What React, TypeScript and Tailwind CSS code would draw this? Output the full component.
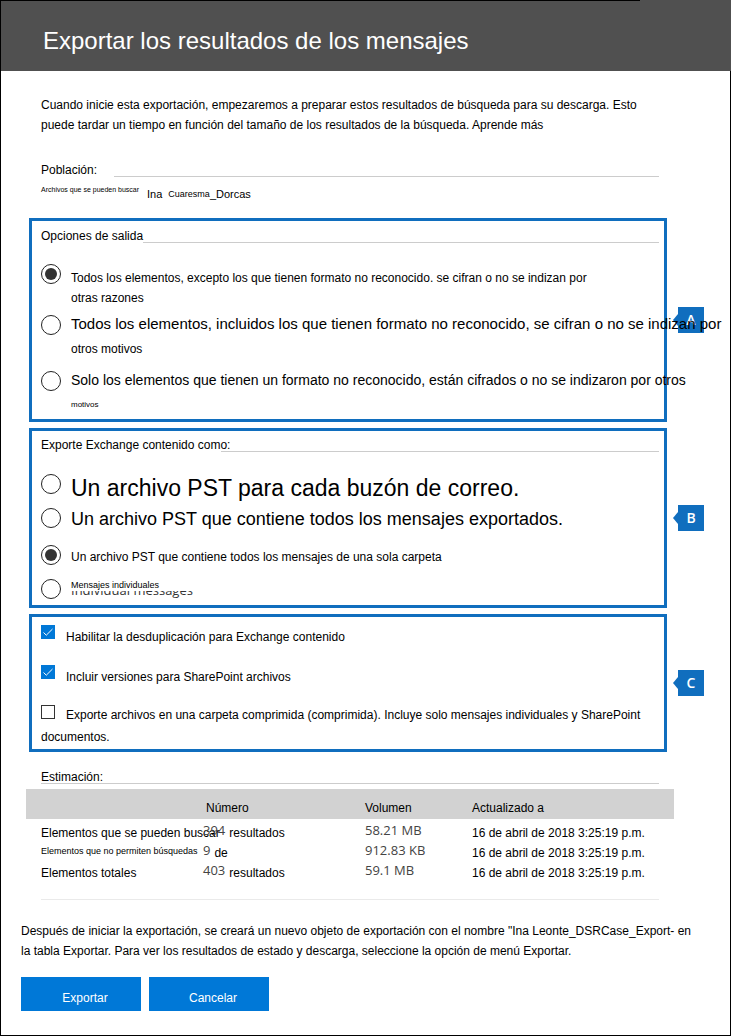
import type { ReactNode } from "react";

function SectionTitle({ children, lineClass }: { children: ReactNode; lineClass: string }) {
  return (
    <div className="grid">
      <span className="col-start-1 row-start-1">{children}</span>
      <span
        aria-hidden="true"
        className={"col-start-1 row-start-1 mb-[3px] self-end border-t border-[#cccccc] " + lineClass}
      />
    </div>
  );
}

function Callout({ letter, children, className }: { letter: string; children: ReactNode; className: string }) {
  return (
    <div className="flex items-center">
      <section
        className={
          "relative z-10 w-0 flex-1 border-[3px] border-[#106ebe] pr-[5px] pl-[9px] " + className
        }
      >
        {children}
      </section>
      <div className="ml-1.5 flex items-center">
        <svg width="5" height="12" viewBox="0 0 5 12" aria-hidden="true">
          <path d="M5 0V12L0 6Z" fill="#106ebe" />
        </svg>
        <span className="flex size-[26px] items-center justify-center bg-[#106ebe] font-['Open_Sans',sans-serif] text-sm font-semibold text-white">
          {letter}
        </span>
      </div>
    </div>
  );
}

function RadioOption({
  id,
  name,
  checked,
  className = "",
  radioClass = "",
  textClass = "",
  children,
}: {
  id: string;
  name: string;
  checked?: boolean;
  className?: string;
  radioClass?: string;
  textClass?: string;
  children: ReactNode;
}) {
  return (
    <div className={"flex items-start gap-2.5 " + className}>
      <input
        type="radio"
        id={id}
        name={name}
        defaultChecked={checked}
        className={
          "size-5 shrink-0 appearance-none rounded-full border border-[#222222] bg-clip-content p-[3px] checked:bg-[#333333] " +
          radioClass
        }
      />
      <label htmlFor={id} className={"block min-w-0 " + textClass}>
        {children}
      </label>
    </div>
  );
}

function Checkbox({ id, checked, className = "" }: { id: string; checked?: boolean; className?: string }) {
  return (
    <span className={"inline-grid size-3.5 shrink-0 " + className}>
      <input
        type="checkbox"
        id={id}
        defaultChecked={checked}
        className="peer col-start-1 row-start-1 size-3.5 appearance-none border border-[#333333] bg-white checked:border-[#0078d7] checked:bg-[#0078d7]"
      />
      <svg
        viewBox="0 0 14 14"
        aria-hidden="true"
        className="pointer-events-none col-start-1 row-start-1 hidden size-3.5 peer-checked:block"
      >
        <path d="M2.5 7.5L5.3 10.2L11.5 4" fill="none" stroke="#ffffff" strokeWidth="1" />
      </svg>
    </span>
  );
}

const rows = [
  { label: "Elementos que se pueden buscar", small: false, count: "394", unit: "resultados", size: "58.21 MB" },
  { label: "Elementos que no permiten búsquedas", small: true, count: "9", unit: "de", size: "912.83 KB" },
  { label: "Elementos totales", small: false, count: "403", unit: "resultados", size: "59.1 MB" },
];

export default function App() {
  return (
    <div className="flex min-h-screen flex-col border-x border-b border-black bg-white font-['Liberation_Sans',Arial,sans-serif] text-xs leading-5 text-black">
      <header className="-mr-px bg-[#505050]">
        <div className="h-px w-7/8 bg-black" />
        <h1 className="pt-[25px] pb-[15px] pl-[42px] text-2xl leading-[30px] text-white">
          Exportar los resultados de los mensajes
        </h1>
      </header>

      <main className="flex flex-col pt-6">
        <div className="pr-[71px] pl-10">
          <p>
            Cuando inicie esta exportación, empezaremos a preparar estos resultados de búsqueda para su
            descarga. Esto puede tardar un tiempo en función del tamaño de los resultados de la búsqueda.
            Aprende más
          </p>
          <div className="mt-[25px]">
            <SectionTitle lineClass="ml-[73px]">Población:</SectionTitle>
          </div>
          <div className="mt-1 flex text-[11px]">
            <span className="-mt-1 text-[7px]">Archivos que se pueden buscar</span>
            <span className="ml-2">Ina</span>
            <span className="ml-1.5 text-[9px]">Cuaresma</span>
            <span>_Dorcas</span>
          </div>
        </div>

        <div className="mt-3.5 flex flex-col gap-1.5 pr-[26px] pl-7">
          <Callout letter="A" className="pt-[5px] pb-1">
            <SectionTitle lineClass="ml-[102px]">Opciones de salida</SectionTitle>
            <RadioOption id="out-1" name="salida" checked className="mt-[18px]" textClass="pt-1 pr-16">
              Todos los elementos, excepto los que tienen formato no reconocido. se cifran o no se indizan por
              otras razones
            </RadioOption>
            <RadioOption id="out-2" name="salida" className="mt-1" radioClass="mt-[3px]">
              <span className="block text-[15px] leading-6 whitespace-nowrap">
                Todos los elementos, incluidos los que tienen formato no reconocido, se cifran o no se indizan por
              </span>
              <span className="block pt-[3px]">otros motivos</span>
            </RadioOption>
            <RadioOption id="out-3" name="salida" className="mt-[9px]" radioClass="mt-[3px]">
              <span className="block text-sm leading-6 whitespace-nowrap">
                Solo los elementos que tienen un formato no reconocido, están cifrados o no se indizaron por otros
              </span>
              <span className="block pt-[3px] text-[8px]">motivos</span>
            </RadioOption>
          </Callout>

          <Callout letter="B" className="pt-1 pb-1.5">
            <SectionTitle lineClass="ml-[180px]">Exporte Exchange contenido como:</SectionTitle>
            <RadioOption id="pst-1" name="pst" className="mt-[19px]" textClass="text-[23px] leading-7">
              Un archivo PST para cada buzón de correo.
            </RadioOption>
            <RadioOption id="pst-2" name="pst" className="mt-1.5" textClass="text-lg leading-[22px]">
              Un archivo PST que contiene todos los mensajes exportados.
            </RadioOption>
            <RadioOption id="pst-3" name="pst" checked className="mt-[15px]" textClass="pt-0.5">
              Un archivo PST que contiene todos los mensajes de una sola carpeta
            </RadioOption>
            <RadioOption id="pst-4" name="pst" className="mt-3" textClass="text-[9px] leading-3">
              <span className="block">Mensajes individuales</span>
              <span
                aria-hidden="true"
                className="flex h-[7px] items-end overflow-hidden font-['Open_Sans',sans-serif] text-[13px] leading-4 text-[#333333]"
              >
                Individual messages
              </span>
            </RadioOption>
          </Callout>

          <Callout letter="C" className="pt-2 pb-px">
            <div className="flex items-start gap-[11px]">
              <Checkbox id="dedupe" checked />
              <label htmlFor="dedupe" className="pt-0.5">
                Habilitar la desduplicación para Exchange contenido
              </label>
            </div>
            <div className="mt-[18px] flex items-start gap-[11px]">
              <Checkbox id="versions" checked />
              <label htmlFor="versions" className="pt-0.5">
                Incluir versiones para SharePoint archivos
              </label>
            </div>
            <div className="mt-[17px] leading-[22px]">
              <Checkbox id="zip" className="mr-[11px] align-baseline" />
              <label htmlFor="zip">
                Exporte archivos en una carpeta comprimida (comprimida). Incluye solo mensajes individuales y
                SharePoint documentos.
              </label>
            </div>
          </Callout>
        </div>

        <div className="mt-[15px] pr-[71px] pl-10">
          <SectionTitle lineClass="">Estimación:</SectionTitle>
        </div>

        <div className="mt-0.5 pr-14 pl-[25px]">
          <table className="w-full table-fixed border-collapse text-left">
            <colgroup>
              <col className="w-[177px]" />
              <col className="w-[162px]" />
              <col className="w-[107px]" />
              <col />
            </colgroup>
            <thead>
              <tr className="h-[30px] bg-[#d2d2d2]">
                <td className="p-0" />
                <th scope="col" className="p-0 pt-2 pl-[3px] font-normal">Número</th>
                <th scope="col" className="p-0 pt-2 font-normal">Volumen</th>
                <th scope="col" className="p-0 pt-2 font-normal">Actualizado a</th>
              </tr>
            </thead>
            <tbody className="before:block before:h-1">
              {rows.map((row) => (
                <tr key={row.label} className="h-5">
                  <th scope="row" className="p-0 pl-[15px] align-top font-normal whitespace-nowrap">
                    {row.small ? <span className="block text-[9px] leading-4">{row.label}</span> : row.label}
                  </th>
                  <td className="p-0 align-top">
                    <span className="flex gap-1">
                      <span className="-mt-[3px] font-['Open_Sans',sans-serif] text-[13px] text-[#444444]">
                        {row.count}
                      </span>
                      <span>{row.unit}</span>
                    </span>
                  </td>
                  <td className="p-0 align-top">
                    <span className="-mt-[3px] block font-['Open_Sans',sans-serif] text-[13px] text-[#444444]">
                      {row.size}
                    </span>
                  </td>
                  <td className="p-0 align-top">16 de abril de 2018 3:25:19 p.m.</td>
                </tr>
              ))}
            </tbody>
          </table>
        </div>

        <hr className="mt-4 mr-[71px] ml-10 border-t border-[#eaeaea]" />

        <p className="mt-[21px] pr-9 pl-5">
          Después de iniciar la exportación, se creará un nuevo objeto de exportación con el nombre "Ina
          Leonte_DSRCase_Export- en la tabla Exportar. Para ver los resultados de estado y descarga, seleccione la
          opción de menú Exportar.
        </p>

        <div className="mt-4 mb-6 flex gap-2 pl-5">
          <button type="button" className="h-[34px] w-[120px] bg-[#0078d7] pt-[7px] pl-2 text-white">
            Exportar
          </button>
          <button type="button" className="h-[34px] w-[120px] bg-[#0078d7] pt-[7px] pl-2 text-white">
            Cancelar
          </button>
        </div>
      </main>
    </div>
  );
}
